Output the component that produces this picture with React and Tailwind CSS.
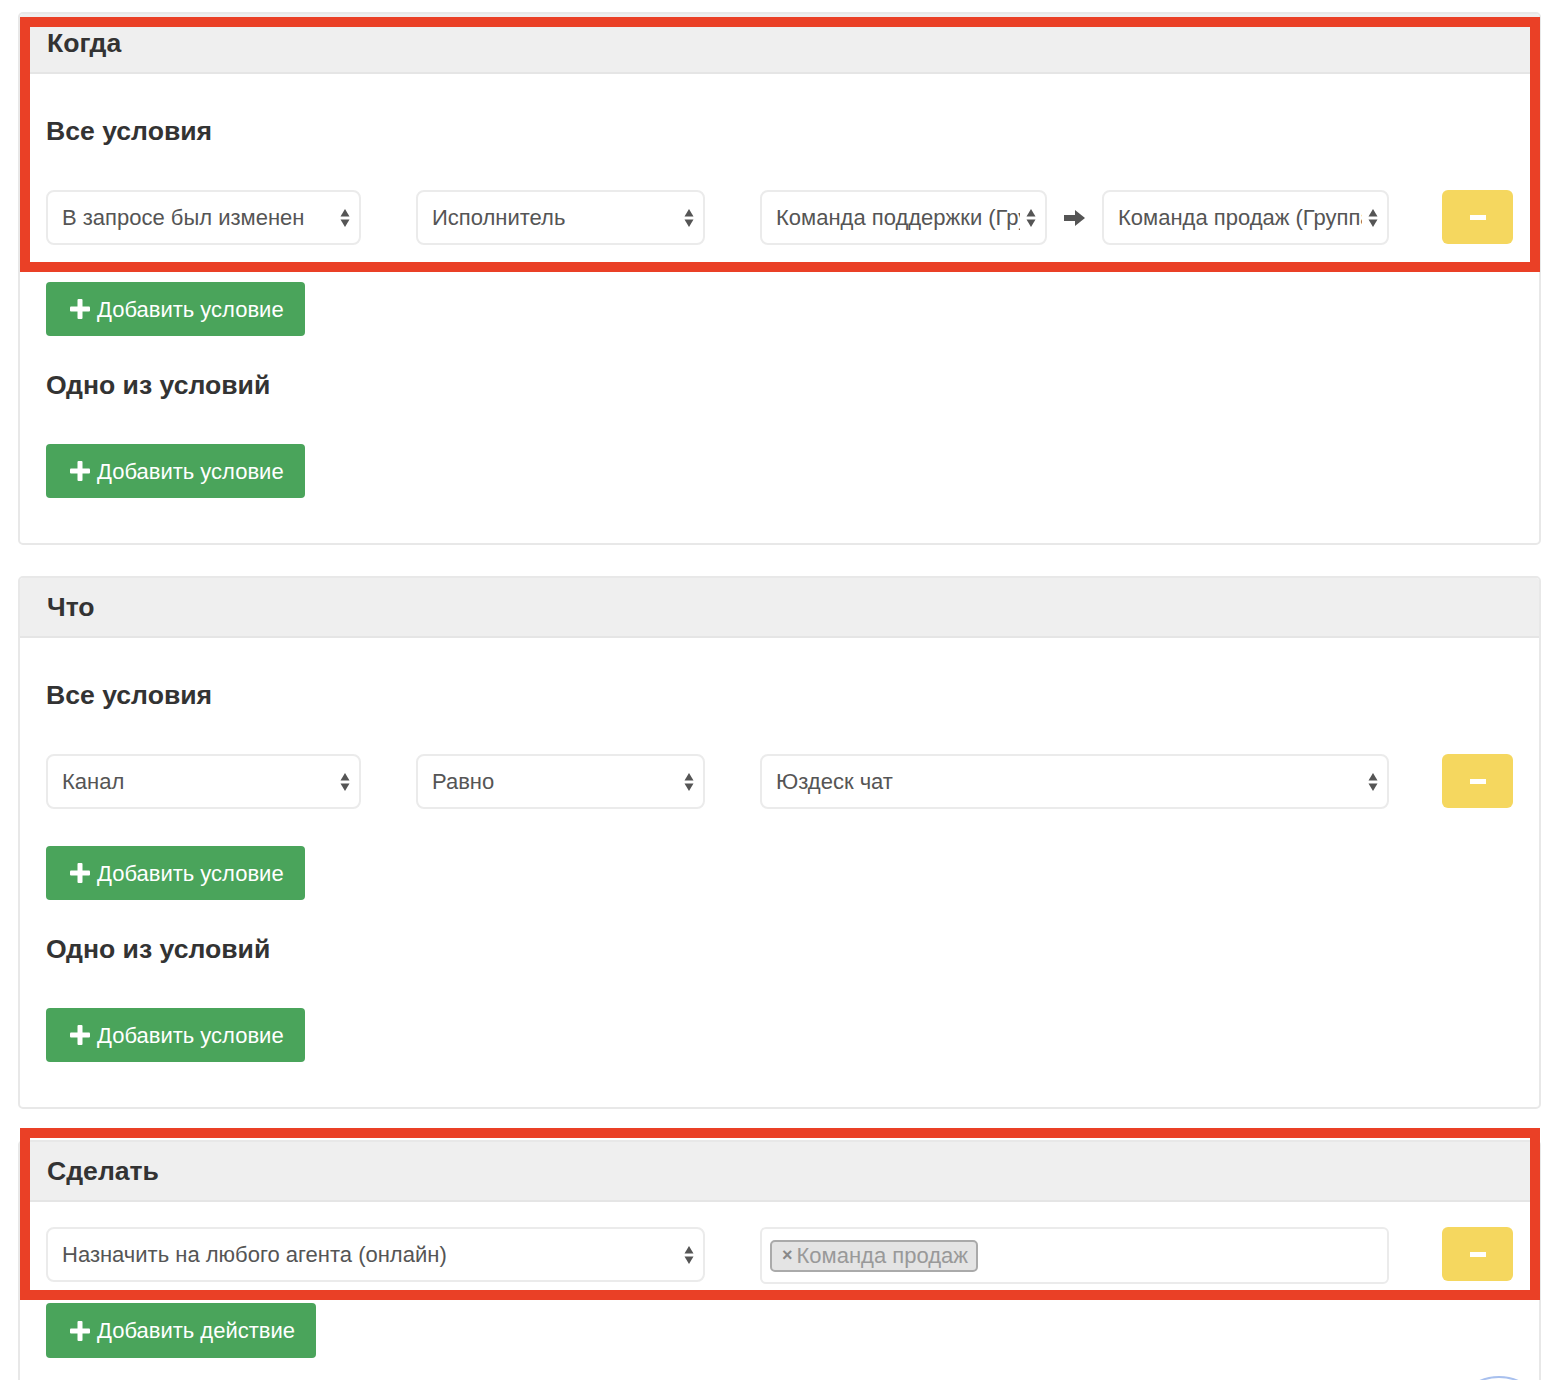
import React from 'react';

const font = "font-['Liberation_Sans',Arial,sans-serif]";

function Arrows() {
  return (
    <svg width="10" height="20" viewBox="0 0 10 20" className="shrink-0">
      <path d="M5 1 L9.5 8.5 L0.5 8.5 Z" fill="#555" />
      <path d="M5 19 L9.5 11.5 L0.5 11.5 Z" fill="#555" />
    </svg>
  );
}

function Select({ text, className = '' }) {
  return (
    <div className={`h-[55px] shrink-0 flex items-center bg-white border-2 border-[#ebebeb] rounded-[8px] pl-[14px] pr-[9px] ${className}`}>
      <div className="flex-1 min-w-0 overflow-hidden whitespace-nowrap text-[22px] text-[#555] mr-[6px]">
        {text}
      </div>
      <Arrows />
    </div>
  );
}

function PlusIcon() {
  return (
    <svg width="20" height="20" viewBox="0 0 20 20" className="shrink-0">
      <rect x="7.5" y="0" width="5" height="20" rx="1" fill="#fff" />
      <rect x="0" y="7.5" width="20" height="5" rx="1" fill="#fff" />
    </svg>
  );
}

function AddButton({ label, className = '' }) {
  return (
    <button className={`h-[54px] flex items-center gap-[7px] pl-[24px] pr-[21px] bg-[#4aa45b] rounded-[4px] text-white text-[22px] ${className}`}>
      <PlusIcon />
      {label}
    </button>
  );
}

function MinusButton() {
  return (
    <button className="ml-auto self-start w-[71px] h-[54px] shrink-0 bg-[#f5d75f] rounded-[6px] flex items-center justify-center">
      <span className="block w-[16px] h-[5px] bg-white" />
    </button>
  );
}

function Heading({ children, className = '' }) {
  return (
    <h3 className={`text-[26.6px] leading-[29px] font-bold text-[#333] ${className}`}>{children}</h3>
  );
}

function Panel({ title, children, className = '' }) {
  return (
    <div className={`border-2 border-[#e8e8e8] rounded-[5px] overflow-hidden ${className}`}>
      <div className="h-[60px] bg-[#efefef] border-b-2 border-[#e5e5e5] flex items-center px-[27px]">
        <Heading>{title}</Heading>
      </div>
      {children}
    </div>
  );
}

function ConditionBlock({ row }) {
  return (
    <div className="pt-[43px] px-[26px] pb-[45px] flex flex-col items-start">
      <Heading>Все условия</Heading>
      <div className="mt-[44px] w-full flex items-center">{row}</div>
      <AddButton label="Добавить условие" className="mt-[37px]" />
      <Heading className="mt-[35px]">Одно из условий</Heading>
      <AddButton label="Добавить условие" className="mt-[44px]" />
    </div>
  );
}

export default function App() {
  return (
    <div className={`relative w-[1556px] h-[1380px] overflow-hidden bg-white ${font}`}>
      <div className="pt-[12px] pl-[18px] pr-[15px] flex flex-col gap-[31px]">
        <Panel title="Когда">
          <ConditionBlock
            row={
              <>
                <Select text="В запросе был изменен" className="w-[315px]" />
                <Select text="Исполнитель" className="w-[289px] ml-[55px]" />
                <Select text="Команда поддержки (Группа)" className="w-[287px] ml-[55px]" />
                <div className="w-[55px] flex justify-center shrink-0">
                  <svg width="22" height="16" viewBox="0 0 22 16">
                    <path d="M0 5 H11 V0 L21 8 L11 16 V11 H0 Z" fill="#555" />
                  </svg>
                </div>
                <Select text="Команда продаж (Группа)" className="w-[287px]" />
                <MinusButton />
              </>
            }
          />
        </Panel>

        <Panel title="Что">
          <ConditionBlock
            row={
              <>
                <Select text="Канал" className="w-[315px]" />
                <Select text="Равно" className="w-[289px] ml-[55px]" />
                <Select text="Юздеск чат" className="w-[629px] ml-[55px]" />
                <MinusButton />
              </>
            }
          />
        </Panel>

        <Panel title="Сделать" className="rounded-b-none">
          <div className="pt-[25px] px-[26px] pb-[80px] flex flex-col items-start">
            <div className="w-full flex items-start">
              <Select text="Назначить на любого агента (онлайн)" className="w-[659px]" />
              <div className="w-[629px] ml-[55px] h-[57px] shrink-0 bg-white border-2 border-[#ebebeb] rounded-[6px] flex items-center pl-[8px]">
                <span className="h-[32px] flex items-center gap-[4px] pl-[10px] pr-[8px] bg-[#e4e4e4] border-2 border-[#aaa] rounded-[5px] text-[22px] text-[#999]">
                  <span className="text-[18px] font-bold text-[#888]">×</span>
                  Команда продаж
                </span>
              </div>
              <MinusButton />
            </div>
            <AddButton label="Добавить действие" className="mt-[19px] h-[55px]" />
          </div>
        </Panel>
      </div>

      {/* red annotation frames */}
      <div className="absolute left-[20px] top-[17px] w-[1520px] h-[255px] border-[10px] border-[#ea4026] pointer-events-none" />
      <div className="absolute left-[20px] top-[1128px] w-[1520px] h-[172px] border-[10px] border-[#ea4026] pointer-events-none" />

      {/* chat widget peeking from the bottom */}
      <div className="absolute left-[1451px] top-[1376px] w-[96px] h-[96px] rounded-full border-2 border-[#a8c0ee]" />
    </div>
  );
}
